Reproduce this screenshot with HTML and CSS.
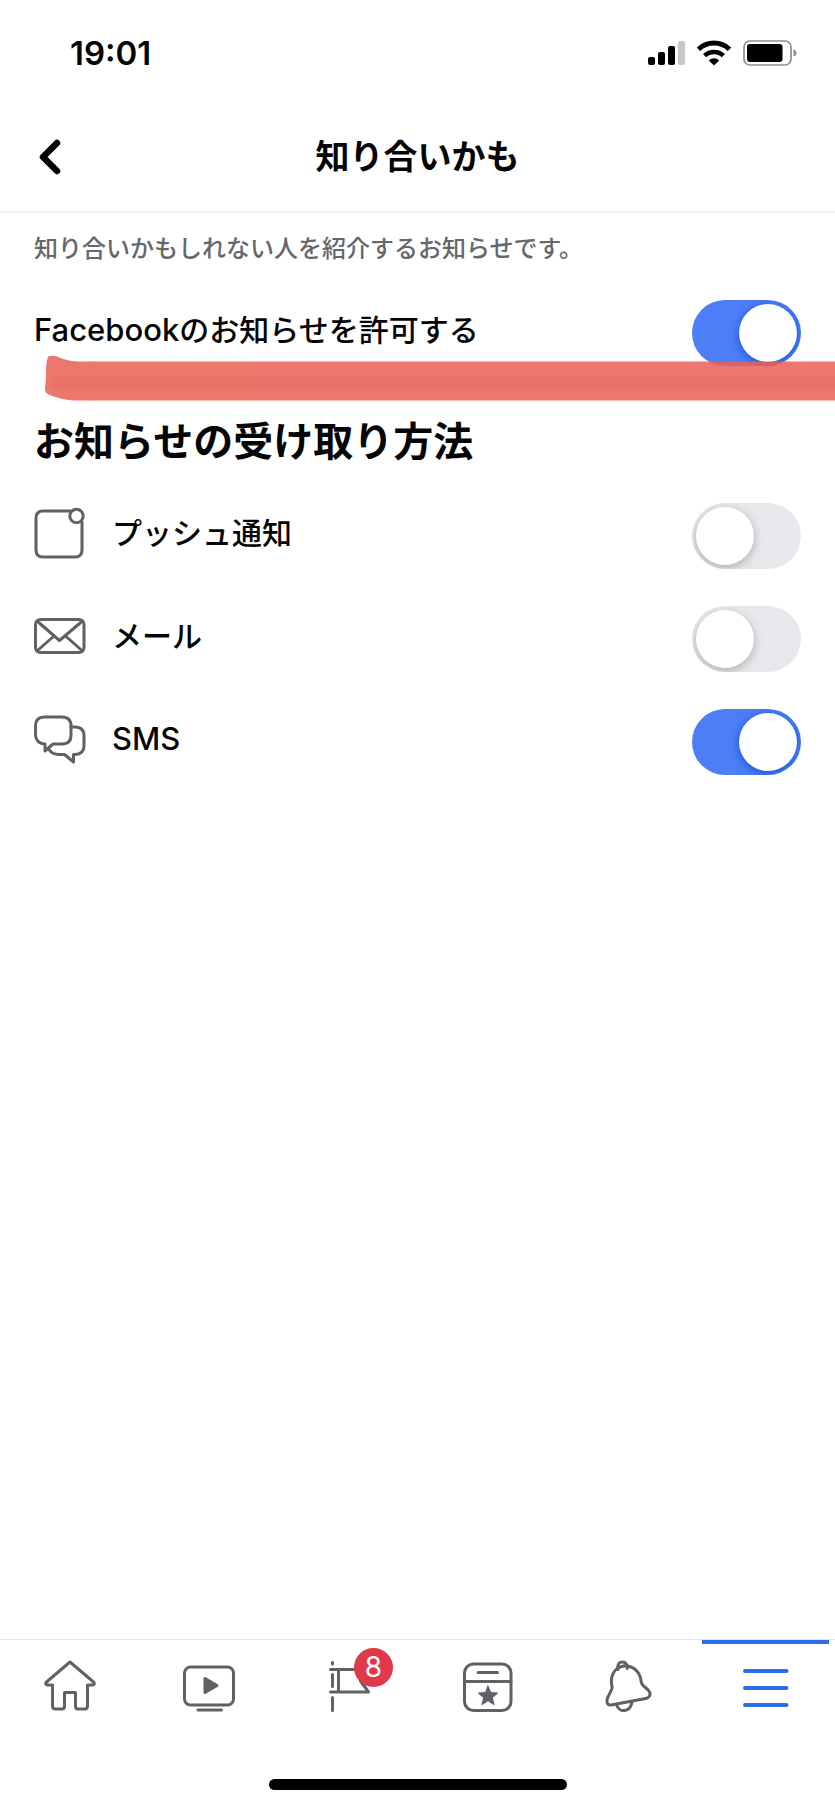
FILE: index.html
```html
<!DOCTYPE html>
<html lang="ja">
<head>
<meta charset="utf-8">
<meta name="viewport" content="width=device-width, initial-scale=1">
<title>知り合いかも</title>
<link rel="stylesheet" href="styles.css">
</head>
<body>
<div class="status">
  <time class="clock">19:01</time>
  <div class="indicators">
    <svg width="37" height="26" viewBox="0 0 37 26" aria-hidden="true">
      <rect x="0" y="17" width="7" height="8" rx="2"/>
      <rect x="10" y="12" width="7" height="13" rx="2"/>
      <rect x="20" y="6" width="7" height="19" rx="2"/>
      <rect x="30" y="1" width="7" height="24" rx="2" fill="#c7c7c7"/>
    </svg>
    <svg width="36" height="26" viewBox="0 0 36 26" aria-hidden="true">
      <path d="M2.500 9.200a22.500 22.500 0 0 1 31 0" fill="none" stroke="#000" stroke-width="5"/>
      <path d="M8.600 15.700a13.600 13.600 0 0 1 18.800 0" fill="none" stroke="#000" stroke-width="4.600"/>
      <path d="M18 25.600l-5.200-5.200a7.600 7.600 0 0 1 10.400 0z"/>
    </svg>
    <svg width="54" height="26" viewBox="0 0 54 26" aria-hidden="true">
      <rect x="1" y="1" width="47" height="24" rx="6" fill="none" stroke="#8e8e8e" stroke-width="1.700"/>
      <rect x="4" y="4" width="35.500" height="18" rx="3"/>
      <path d="M50.500 9.500v7q3-1 3-3.500t-3-3.500z" fill="#8e8e8e"/>
    </svg>
  </div>
</div>
<header class="header">
  <button class="back" type="button" aria-label="戻る">
    <svg width="24" height="38" viewBox="0 0 24 38" aria-hidden="true"><path d="M19 5L5 19l14 14" fill="none" stroke="#000" stroke-width="6.500" stroke-linecap="round" stroke-linejoin="round"/></svg>
  </button>
  <h1 class="title">知り合いかも</h1>
</header>
<main class="content">
  <p class="description">知り合いかもしれない人を紹介するお知らせです。</p>
  <div class="row">
    <label class="label" for="allow"><span class="latin">Facebook</span>のお知らせを許可する</label>
    <input class="toggle" id="allow" type="checkbox" role="switch" checked>
    <svg class="marker" aria-hidden="true">
      <g fill="#ea6156" opacity=".86">
        <path d="M4 2q5-1 9 1 12 5 24 4.500h9v39h-18q-12-1-22-5-6-2-6-6 1-9 1-17 0-14 3-16.500z"/>
        <rect x="45" y="7.500" width="100%" height="39"/>
      </g>
      <rect x="6" y="23" width="100%" height="12" fill="#ea5f50" opacity=".2"/>
    </svg>
  </div>
  <h2 class="heading">お知らせの受け取り方法</h2>
  <ul class="methods">
    <li class="row">
      <svg class="icon" viewBox="0 0 52 52" aria-hidden="true">
        <path d="M36.500 4H9Q2 4 2 11v32q0 7 7 7h32q7 0 7-7V15"/>
        <circle cx="42.500" cy="9" r="6.700"/>
      </svg>
      <label class="label" for="push">プッシュ通知</label>
      <input class="toggle" id="push" type="checkbox" role="switch">
    </li>
    <li class="row">
      <svg class="icon" viewBox="0 0 52 52" aria-hidden="true">
        <rect x="1.500" y="9.500" width="48.500" height="33" rx="5"/>
        <path d="M3 11l22.500 19.500L48.500 11M3 41l17-15M48.500 41l-17-15"/>
      </svg>
      <label class="label" for="mail">メール</label>
      <input class="toggle" id="mail" type="checkbox" role="switch">
    </li>
    <li class="row">
      <svg class="icon" viewBox="0 0 52 52" aria-hidden="true">
        <path d="M10 4h18q9 0 9 9v9q0 9-9 9h-9l-8 7v-7q-9-.500-9.500-9v-9q0-9 8.500-9z"/>
        <path d="M37 14h4q9 0 9 9v10q0 8-9 8.500h-1.500v7.500l-9-7.500H25q-7 0-10-5"/>
      </svg>
      <label class="label" for="sms"><span class="latin">SMS</span></label>
      <input class="toggle" id="sms" type="checkbox" role="switch" checked>
    </li>
  </ul>
</main>
<footer class="footer">
  <nav class="tabs">
    <a class="tab" href="#" aria-label="ホーム">
      <svg class="icon" viewBox="0 0 52 52" aria-hidden="true"><path d="M26 2L2.500 22q-2 2.500 1 3h5v21q0 3 3 3H18q2.500 0 2.500-3V32.500h11V46q0 3 2.500 3h6.500q3 0 3-3V25h5q3-.500 1-3z"/></svg>
    </a>
    <a class="tab" href="#" aria-label="動画">
      <svg class="icon" viewBox="0 0 52 52" aria-hidden="true"><rect x="1.500" y="7" width="49" height="38" rx="6"/><path d="M15 50H38.500"/><path class="solid" d="M22 18.500v14L34 25.500z"/></svg>
    </a>
    <a class="tab" href="#" aria-label="ページ、お知らせ8件">
      <span class="flag">
        <svg class="icon" viewBox="0 0 52 52" aria-hidden="true"><path d="M10.500 2.500v1.500M10.500 14.500v12M10.500 37.500v13M8.500 9.500h36l-6 11.500L46.500 32H8.500M16.500 9.500v22.500"/></svg>
        <span class="badge">8</span>
      </span>
    </a>
    <a class="tab" href="#" aria-label="イベント">
      <svg class="icon" viewBox="0 0 52 52" aria-hidden="true"><rect x="3.500" y="4" width="46.500" height="46.500" rx="9"/><path d="M3.500 21.500H50M17 12.500h19.500"/><path class="star" d="M27 26l2.700 6.600 7 .500-5.400 4.600 1.800 7-6.100-3.900-6.100 3.900 1.800-7-5.400-4.600 7-.500z"/></svg>
    </a>
    <a class="tab" href="#" aria-label="お知らせ">
      <svg class="icon" viewBox="0 0 52 52" aria-hidden="true"><g transform="translate(2 0)"><path d="M16 9.500C15 4 17.500 2 20.500 2s5 2.500 4.800 6.500"/><path d="M9.500 29.500q1-1.500.300-4C6 6 28-1 37 14q1.800 3 2.200 8 .300 2.500 3 4.500l3.500 3q3.300 3 2 6-1 2.500-4 3L9 45q-4.500.500-4-5 .500-3 2.500-6z"/><path d="M14.500 44.500c2 8 13.500 9 15.500-2.500"/></g></svg>
    </a>
    <a class="tab tab-active" href="#" aria-label="メニュー" aria-current="page">
      <svg class="icon" viewBox="0 0 52 52" aria-hidden="true"><path d="M6 11h41.500M6 28h41.500M6 45h41.500"/></svg>
    </a>
  </nav>
  <div class="home-bar"></div>
</footer>
</body>
</html>
```
FILE: styles.css
```css
* {
  box-sizing: border-box;
}

body {
  margin: 0;
  min-height: 100vh;
  display: flex;
  flex-direction: column;
  background: #fff;
  color: #050505;
  font-family: Inter, "Noto Sans CJK JP", sans-serif;
  font-size: 30px;
  font-weight: 500;
  overflow-x: hidden;
}

h1, h2, p, ul {
  margin: 0;
  padding: 0;
}

.status {
  height: 106px;
  padding: 0 38px 0 70px;
  display: flex;
  align-items: center;
  justify-content: space-between;
}

.clock {
  font-size: 33px;
  font-weight: 600;
  line-height: 40px;
}

.indicators {
  display: flex;
  gap: 11px;
}

.header {
  height: 107px;
  padding: 0 38px 4px;
  display: grid;
  grid-template-columns: 24px 1fr 24px;
  align-items: center;
  border-bottom: 2px solid #f0f0f1;
}

.back {
  padding: 0;
  border: 0;
  background: none;
  display: flex;
}

.title {
  font-size: 34px;
  font-weight: 600;
  line-height: 48px;
  text-align: center;
}

.content {
  flex: 1;
  padding: 20px 34px 40px;
  display: flex;
  flex-direction: column;
}

.description {
  margin-bottom: 35px;
  color: #65676b;
  font-size: 24px;
  line-height: 32px;
}

.row {
  position: relative;
  display: flex;
  align-items: center;
}

.label {
  flex: 1;
  padding-bottom: 6px;
  line-height: 40px;
}

.latin {
  font-size: 31px;
}

.toggle {
  appearance: none;
  flex: none;
  width: 109px;
  height: 66px;
  margin: 0;
  padding: 4px;
  border-radius: 33px;
  background: #e8e8ec;
  overflow: hidden;
  display: flex;
}

.toggle::before {
  content: "";
  width: 58px;
  height: 58px;
  border-radius: 50%;
  background: #fff;
  box-shadow: 0 3px 10px rgba(0, 0, 0, 0.25);
}

.toggle:checked {
  justify-content: flex-end;
  background: #4e7ef7;
}

.toggle:checked::before {
  box-shadow: 0 2px 10px #1450d8;
}

.marker {
  position: absolute;
  top: 54px;
  left: 11px;
  width: calc(100% + 24px);
  height: 50px;
  pointer-events: none;
}

.heading {
  margin: 52px 0 37px;
  font-size: 40px;
  font-weight: 600;
  line-height: 48px;
}

.methods {
  list-style: none;
  display: flex;
  flex-direction: column;
  gap: 37px;
}

.methods .row {
  gap: 26px;
}

.icon {
  flex: none;
  width: 52px;
  height: 52px;
  fill: none;
  stroke: #606166;
  stroke-width: 3px;
  stroke-linecap: round;
  stroke-linejoin: round;
}

.methods .icon {
  margin-bottom: 6px;
}

.solid,
.star {
  fill: #606166;
}

.star {
  stroke-width: 1px;
}

.footer {
  border-top: 1px solid #e4e5e7;
}

.tabs {
  display: grid;
  grid-template-columns: repeat(6, 1fr);
}

.tab {
  height: 139px;
  padding-top: 20px;
  display: flex;
  justify-content: center;
  align-items: flex-start;
  text-decoration: none;
}

.tab-active {
  margin: 0 6px;
  border-top: 4px solid #2b6de9;
  border-radius: 0 0 4px 4px;
  padding-top: 16px;
}

.tab-active .icon {
  stroke: #2b6de9;
  stroke-width: 4px;
}

.flag {
  position: relative;
  display: flex;
}

.badge {
  position: absolute;
  top: -12px;
  left: 32px;
  width: 39px;
  height: 39px;
  border-radius: 50%;
  background: #e0394a;
  color: #fff;
  font-size: 28px;
  font-weight: 400;
  line-height: 39px;
  text-align: center;
}

.home-bar {
  width: 298px;
  height: 11px;
  margin: 0 auto 17px;
  border-radius: 6px;
  background: #000;
}
```
